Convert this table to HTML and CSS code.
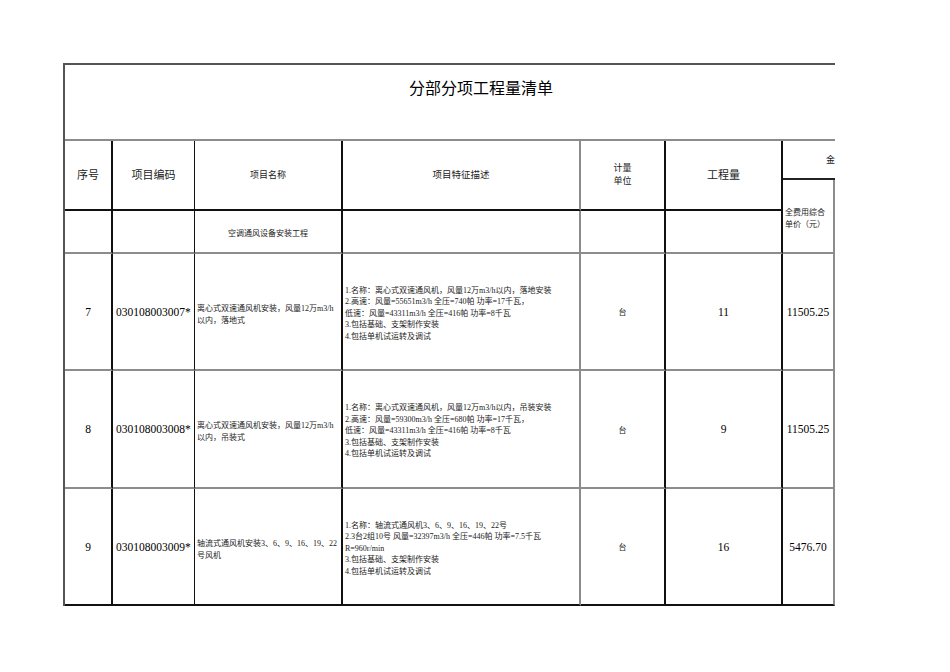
FILE: index.html
```html
<!DOCTYPE html>
<html lang="zh-CN">
<head>
<meta charset="utf-8">
<title>分部分项工程量清单</title>
<link rel="stylesheet" href="styles.css">
</head>
<body>
<div class="page">
  <div class="clip">
    <table class="sheet">
      <colgroup>
        <col class="c1"><col class="c2"><col class="c3"><col class="c4">
        <col class="c5"><col class="c6"><col class="c7"><col class="c8">
      </colgroup>
      <tr class="r-title">
        <td colspan="8" class="title">分部分项工程量清单</td>
      </tr>
      <tr class="r-h1">
        <td rowspan="2" class="hd lg k1 bb-black">序号</td>
        <td rowspan="2" class="hd lg k2 bb-black">项目编码</td>
        <td rowspan="2" class="hd sm k3 bb-black">项目名称</td>
        <td rowspan="2" class="hd md k4 bb-black">项目特征描述</td>
        <td rowspan="2" class="hd sm k5 bb-black">计量<br>单位</td>
        <td rowspan="2" class="hd lg k6 bb-black">工程量</td>
        <td colspan="2" class="hd grp k8 bb-sub">金额</td>
      </tr>
      <tr class="r-h2">
        <td rowspan="2" class="sub k7">全费用综合<br>单价（元）</td>
        <td rowspan="2" class="sub k8"></td>
      </tr>
      <tr class="r-h3">
        <td class="k1"></td>
        <td class="k2"></td>
        <td class="section k3">空调通风设备安装工程</td>
        <td class="k4"></td>
        <td class="k5"></td>
        <td class="k6"></td>
      </tr>
      <tr class="r-d1">
        <td class="num k1">7</td>
        <td class="code k2">030108003007*</td>
        <td class="name k3">离心式双速通风机安装，风量12万m3/h以内，落地式</td>
        <td class="desc k4">1.名称：离心式双速通风机，风量12万m3/h以内，落地安装<br>2.高速：风量=55651m3/h 全压=740帕 功率=17千瓦，<br>低速：风量=43311m3/h 全压=416帕 功率=8千瓦<br>3.包括基础、支架制作安装<br>4.包括单机试运转及调试</td>
        <td class="unit k5">台</td>
        <td class="qty k6">11</td>
        <td class="price k7">11505.25</td>
        <td class="price k8"></td>
      </tr>
      <tr class="r-d2">
        <td class="num k1">8</td>
        <td class="code k2">030108003008*</td>
        <td class="name k3">离心式双速通风机安装，风量12万m3/h以内，吊装式</td>
        <td class="desc k4">1.名称：离心式双速通风机，风量12万m3/h以内，吊装安装<br>2.高速：风量=59300m3/h 全压=680帕 功率=17千瓦，<br>低速：风量=43311m3/h 全压=416帕 功率=8千瓦<br>3.包括基础、支架制作安装<br>4.包括单机试运转及调试</td>
        <td class="unit k5">台</td>
        <td class="qty k6">9</td>
        <td class="price k7">11505.25</td>
        <td class="price k8"></td>
      </tr>
      <tr class="r-d3">
        <td class="num k1 bb-black">9</td>
        <td class="code k2 bb-black">030108003009*</td>
        <td class="name k3 bb-black">轴流式通风机安装3、6、9、16、19、22号风机</td>
        <td class="desc k4 bb-black">1.名称：轴流式通风机3、6、9、16、19、22号<br>2.3台2组10号 风量=32397m3/h 全压=446帕 功率=7.5千瓦<br>R=960r/min<br>3.包括基础、支架制作安装<br>4.包括单机试运转及调试</td>
        <td class="unit k5 bb-black">台</td>
        <td class="qty k6 bb-black">16</td>
        <td class="price k7 bb-black">5476.70</td>
        <td class="price k8 bb-black"></td>
      </tr>
    </table>
  </div>
</div>
</body>
</html>
```

FILE: styles.css
```css
html, body {
  margin: 0;
  padding: 0;
  background: #ffffff;
}

body {
  font-family: "Liberation Serif", "Noto Sans CJK SC", serif;
  color: #000000;
}

.page {
  padding: 63px 0 0 63px;
}

.clip {
  width: 772px;
  overflow: hidden;
}

.sheet {
  table-layout: fixed;
  width: 836px;
  border-collapse: separate;
  border-spacing: 0;
  border-left: 2px solid #555555;
  border-top: 2px solid #555555;
}

.c1 { width: 48px; }
.c2 { width: 82px; }
.c3 { width: 148px; }
.c4 { width: 238px; }
.c5 { width: 85px; }
.c6 { width: 117px; }
.c7 { width: 52px; }
.c8 { width: 64px; }

.sheet td {
  padding: 0;
  overflow: hidden;
  vertical-align: middle;
  border-bottom: 2px solid #8c8c8c;
}

/* column right-hand rules */
.k1 { border-right: 2px solid #111111; }
.k2 { border-right: 1px solid #111111; }
.k3 { border-right: 2px solid #111111; }
.k4 { border-right: 2px solid #8c8c8c; }
.k5 { border-right: 2px solid #111111; }
.k6 { border-right: 2px solid #111111; }
.k7 { border-right: 2px solid #8c8c8c; }
.k8 { border-right: 2px solid #8c8c8c; }

.sheet td.bb-black { border-bottom: 2px solid #111111; }
.sheet td.bb-sub { border-bottom: 2px solid #222222; }

/* row heights */
.r-title { height: 76px; }
.r-h1 { height: 39px; }
.r-h2 { height: 31px; }
.r-h3 { height: 43px; }
.r-d1 { height: 117px; }
.r-d2 { height: 118px; }
.r-d3 { height: 117px; }

.title {
  vertical-align: top !important;
  text-align: center;
  padding-top: 14px !important;
  font-size: 16px;
  line-height: 20px;
  letter-spacing: 0;
  border-right: 2px solid #8c8c8c;
}

.hd {
  text-align: center;
  color: #222222;
}
.hd.lg { font-size: 11px; line-height: 14px; }
.hd.md { font-size: 9.5px; line-height: 13px; }
.hd.sm { font-size: 9px; line-height: 13px; }
.hd.grp {
  font-size: 9px;
  line-height: 14px;
  text-align: left;
  padding-left: 43px !important;
}

.sub {
  text-align: left;
  padding: 6px 0 0 2px !important;
  font-size: 8px;
  line-height: 12px;
  color: #222222;
  white-space: nowrap;
}

.section {
  text-align: center;
  font-size: 8px;
  line-height: 12px;
  color: #222222;
  padding-top: 4px !important;
}

.num {
  text-align: center;
  font-size: 11.5px;
}

.code {
  text-align: left;
  padding-left: 3px !important;
  font-size: 11.5px;
  white-space: nowrap;
}

.name {
  text-align: left;
  padding: 6px 2px 0 2px !important;
  font-size: 8px;
  line-height: 12px;
  color: #222222;
}

.desc {
  text-align: left;
  padding: 4px 0 0 2px !important;
  font-size: 8px;
  line-height: 11.5px;
  color: #222222;
  white-space: nowrap;
}

.unit {
  text-align: center;
  font-size: 8px;
  color: #222222;
}

.qty {
  text-align: center;
  font-size: 11.5px;
}

.price {
  text-align: center;
  font-size: 11.5px;
  white-space: nowrap;
}
```
